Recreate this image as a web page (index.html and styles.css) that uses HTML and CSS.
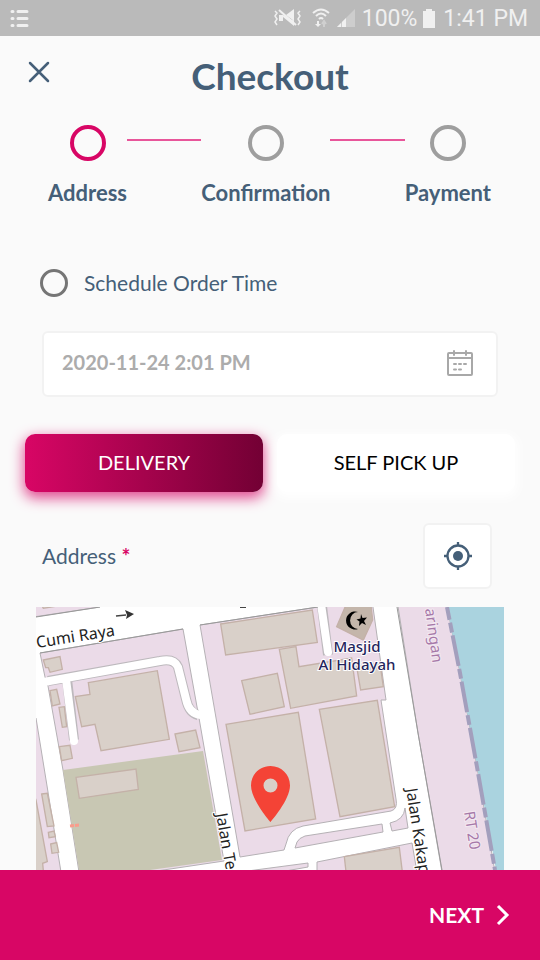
FILE: index.html
```html
<!DOCTYPE html>
<html lang="en">
<head>
<meta charset="utf-8">
<meta name="viewport" content="width=device-width, initial-scale=1">
<title>Checkout</title>
<link rel="stylesheet" href="styles.css">
</head>
<body>
<div class="status">
  <svg class="status-list" width="20" height="18" viewBox="0 0 20 18" stroke="currentColor" stroke-width="3" stroke-linecap="round"><path d="M2 2.5h1M8 2.5h9M2 9.5h1M8 9.5h9M2 16.500h1M8 16.500h9"/></svg>
  <svg width="28" height="20" viewBox="0 0 28 20" fill="none" stroke="currentColor" stroke-width="1.500"><path d="M5 7h4v6H5zM12 7l8-6v12zM9 9l11 9v-5L9 7z" fill="currentColor" stroke="none"/><path d="M5 2l17 15" stroke-width="2"/><path d="M1 3l2 2-2 3 2 3-2 3 2 3M26 3l-2 2 2 3-2 3 2 3-2 3"/></svg>
  <svg class="status-wifi" width="18" height="20" viewBox="0 0 18 20" fill="none" stroke="currentColor" stroke-width="2"><path d="M1 5q8-7 16 0M4 8q5-5 10 0M7 11q2-2 4 0"/><path d="M6 13v4" /><path d="M3 16h6l-3 3z" fill="currentColor" stroke="none"/><path d="M12 19v-4M10 16l2-3 2 3" opacity=".4"/></svg>
  <svg width="20" height="20" viewBox="0 0 20 20" fill="currentColor"><path d="M1 19L19 1v18z" opacity=".35"/><path d="M1 19l4-4v4zM6 19v-5l4-4v9z"/></svg>
  <span class="status-text">100%</span>
  <svg class="status-battery" width="12" height="19" viewBox="0 0 12 19" fill="currentColor"><path d="M3 0h6v2h3v17H0V2h3z"/></svg>
  <span class="status-text">1:41 PM</span>
</div>

<main class="page">
  <header class="header">
    <button class="close" aria-label="Close"><svg width="22" height="22" viewBox="0 0 22 22" fill="none" stroke="currentColor" stroke-width="2.500" stroke-linecap="round"><path d="M2 2l18 18M20 2L2 20"/></svg></button>
    <h1 class="title">Checkout</h1>
  </header>

  <ol class="steps">
    <li class="step step-current"><span class="dot"></span>Address</li>
    <li class="line" role="presentation"></li>
    <li class="step"><span class="dot"></span>Confirmation</li>
    <li class="line" role="presentation"></li>
    <li class="step"><span class="dot"></span>Payment</li>
  </ol>

  <form class="form">
    <label class="schedule"><input type="radio" name="schedule">Schedule Order Time</label>
    <div class="field">
      <input class="date" type="text" value="2020-11-24 2:01 PM" aria-label="Order time">
      <button class="calendar" type="button" aria-label="Pick a date"><svg width="28" height="28" viewBox="0 0 28 28" fill="none" stroke="currentColor" stroke-width="2" stroke-linecap="round"><rect x="2" y="4" width="24" height="22" rx="1"/><path d="M2 9h24M8 2v4M20 2v4"/><path d="M8 15h2M13 15h2M18 15h2M8 20.500h2M13 20.500h2" /></svg></button>
    </div>
    <div class="modes">
      <button class="mode mode-on" type="button">DELIVERY</button>
      <button class="mode" type="button">SELF PICK UP</button>
    </div>
    <div class="address">
      <span>Address <b class="required">*</b></span>
      <button class="locate" type="button" aria-label="Use my location"><svg width="30" height="30" viewBox="0 0 30 30" fill="none" stroke="currentColor" stroke-width="2.300"><circle cx="15" cy="15" r="10.500"/><circle cx="15" cy="15" r="5" fill="currentColor" stroke="none"/><path d="M15 1v4M15 25v4M1 15h4M25 15h4"/></svg></button>
    </div>
  </form>

  <div class="map">
    <svg class="map-art" viewBox="36 607 468 263" preserveAspectRatio="xMidYMin slice" role="img" aria-label="Map">
      <path fill="#fff" d="M36 607h468v263H36z"/>
      <g class="land">
        <path d="M30 617.500L100 607V600H30z"/>
        <path d="M40 653L183 629L199 718L224 861L150 872H79L63 770L48 686L45 677z"/>
        <path d="M36 718L61 872H30V718z"/>
        <path d="M200 625L318 607V600H372L386 700H381L396 799Q398 809 391 811L303 826Q289 829 286 844L284 850L240 857z"/>
        <path d="M295 848L297 842Q299 838 305 836L382 824L383 832z"/>
        <path d="M390 823Q404 820 405 808L408 828L392 831z"/>
        <path d="M240 872L308 863V867L280 872zM317 872V862L412 843L417 872z"/>
        <path d="M397 600L418 733L442 872H495L477 767L460 673L446 600z"/>
      </g>
      <path fill="#c8c7b3" d="M63 770L203 751L222 860L150 870H79z"/>
      <path fill="#aad3df" d="M447 607L460 673L477 767L496 870H504V607z"/>
      <g fill="none" stroke-linejoin="round">
        <path stroke="#bdb9bd" stroke-width="10" d="M48 681L160 661Q174 658 178 667L186 699Q189 713 198 715M67 679L74 740"/>
        <path stroke="#fff" stroke-width="8" stroke-linecap="round" d="M44 682L160 661Q174 658 178 667L186 699Q189 714 201 715M66 679L74 741"/>
        <path stroke="#bdb9bd" stroke-width="10" d="M322 606L328 655"/>
        <path stroke="#fff" stroke-width="8" stroke-linecap="round" d="M321 604L328 652"/>
      </g>
      <path fill="none" stroke="#999" d="M40 653L183 629M200 625L318 607M397 607L418 733L442 870M36 617L100 607"/>
      <g class="buildings" transform="translate(30 600) scale(.3333)">
        <path d="M40 180L90 170L97 208L60 217L55 203L47 203zM60 272L80 268L90 312L67 318zM87 322L103 320L110 380L97 382zM88 440L120 436L127 475L95 482z"/>
        <path d="M175 248L382 212L418 418L213 452L195 373L155 380L136 290L180 283zM435 402L497 390L510 443L447 455zM138 532L318 507L325 568L148 595z"/>
        <path d="M35 582L52 580L72 678L52 680zM55 697L72 693L76 710L57 713zM62 732L80 728L86 757L66 760zM10 580L18 600L52 785L38 790L40 812H10zM35 15L40 25L100 15z"/>
      </g>
      <g class="buildings" transform="translate(190 600) scale(.3333)">
        <path d="M92 72L367 30L382 127L107 165zM268 148L318 140L327 200L485 174L500 288L302 325zM155 242L262 220L283 320L180 343zM108 373L325 337L377 657L165 693z"/>
        <path d="M388 328L562 301L614 620L450 650zM500 200L570 190L580 260L512 270zM463 770L628 742L637 815H468z"/>
        <path fill="#c4b6ab" d="M468 15L440 80L520 120L548 60L543 15z"/>
      </g>
      <path fill="none" stroke="#a39fbd" stroke-width="4" stroke-dasharray="31 3 10 3" stroke-dashoffset="18" d="M447 607L460 673L477 767L495 870"/>
      <path stroke="#444" stroke-width="1.500" d="M116 616l10-1"/><path fill="#333" d="M125 610l9 4-8 5 1-4z"/>
      <path stroke="#444" stroke-width="2" d="M240 607h6"/>
      <path stroke="#fa9c8c" stroke-width="3" stroke-dasharray="4 1" d="M70 826l9-1"/>
      <path fill="#000" d="M358 612a9 9 0 1 0 0 17a7 7.500 0 1 1 0-17zM361 614l1.500 4 4.500-.5-3 3.500 2 4-4-2-3 3 .5-4.500-3-2 4-1z"/>
      <g class="labels">
        <text x="37" y="648" transform="rotate(-9 37 648)">Cumi Raya</text>
        <text x="216" y="814" transform="rotate(80 216 814)">Jalan Teri</text>
        <text x="406" y="789" transform="rotate(81 406 789)">Jalan Kakap</text>
        <g class="place"><text x="357" y="652">Masjid</text><text x="357" y="670">Al Hidayah</text></g>
        <g class="area"><text x="425" y="609" transform="rotate(82 425 609)">aringan</text><text x="464" y="812" transform="rotate(81 464 812)">RT 20</text></g>
      </g>
      <path fill="#f44336" fill-rule="evenodd" d="M270.500 766c-11 0-19.500 8.500-19.500 19.500C251 800 270.500 822 270.500 822S290 800 290 785.500c0-11-8.500-19.500-19.500-19.500zm0 12.500a7 7 0 1 1 0 14a7 7 0 1 1 0-14z"/>
    </svg>
  </div>
</main>

<footer class="footer">
  <button class="next">NEXT <svg width="14" height="22" viewBox="0 0 14 22" fill="none" stroke="currentColor" stroke-width="3"><path d="M2 2l9 9-9 9"/></svg></button>
</footer>
</body>
</html>
```
FILE: styles.css
```css
* {
  box-sizing: border-box;
}

body {
  margin: 0;
  height: 100vh;
  display: flex;
  flex-direction: column;
  background: #fafafa;
  color: #455f78;
  font: 21px/28px Lato, "Open Sans", sans-serif;
}

button {
  padding: 0;
  border: 0;
  background: none;
  color: inherit;
  font: inherit;
}

svg {
  display: block;
  flex: none;
}

.status {
  flex: none;
  height: 36px;
  padding: 0 12px 0 10px;
  display: flex;
  align-items: center;
  gap: 6px;
  background: #bababa;
  color: #f0f0f0;
  font: 23px/36px Roboto, sans-serif;
}

.status-list {
  margin-right: auto;
}

.status-wifi {
  margin-left: 4px;
}

.status-text {
  padding-top: 2px;
}

.status-battery {
  margin-right: 2px;
}

.page {
  flex: 1;
  min-height: 0;
  display: flex;
  flex-direction: column;
}

.header {
  display: grid;
  grid-template-columns: 50px 1fr 50px;
  padding: 18px 0 0;
}

.close {
  width: 22px;
  height: 36px;
  margin-left: 28px;
}

.title {
  margin: 0;
  text-align: center;
  font-size: 37px;
  line-height: 44px;
}

.steps {
  display: flex;
  margin: 0;
  padding: 27px 49px 0 48px;
  list-style: none;
  font-size: 22px;
  font-weight: bold;
}

.step {
  display: flex;
  flex-direction: column;
  align-items: center;
  gap: 18px;
}

.dot {
  width: 36px;
  height: 36px;
  border: 4px solid #9e9e9e;
  border-radius: 50%;
}

.step-current .dot {
  border-color: #d80665;
}

.line {
  flex: 1;
  height: 2px;
  margin-top: 14px;
  background: #e8559a;
}

.schedule {
  display: flex;
  align-items: center;
  gap: 16px;
  padding: 62px 40px 0;
}

.schedule input {
  appearance: none;
  width: 28px;
  height: 28px;
  margin: 0;
  border: 3px solid #757575;
  border-radius: 50%;
}

.field {
  display: flex;
  align-items: center;
  height: 66px;
  margin: 34px 42px 0;
  padding: 0 22px 2px 18px;
  border: 2px solid #f2f2f2;
  border-radius: 6px;
  background: #fff;
}

.date {
  flex: 1;
  min-width: 0;
  padding: 0 0 2px;
  border: 0;
  outline: 0;
  background: none;
  color: #acacac;
  font: bold 20px/28px Lato, sans-serif;
}

.calendar {
  color: #a8a8a8;
}

.modes {
  display: grid;
  grid-template-columns: 1fr 1fr;
  gap: 14px;
  margin: 37px 25px 0;
}

.mode {
  height: 58px;
  padding-bottom: 2px;
  border-radius: 10px;
  background: #fff;
  color: #000;
  font-size: 20px;
  box-shadow: 0 3px 12px 3px #fff;
}

.mode-on {
  background: linear-gradient(90deg, #d80665, #730034);
  color: #fff;
  box-shadow: 0 5px 14px 1px #e0498f;
}

.address {
  display: flex;
  align-items: center;
  justify-content: space-between;
  padding: 31px 48px 0 42px;
}

.required {
  color: #d80665;
}

.locate {
  display: grid;
  place-items: center;
  width: 69px;
  height: 66px;
  border: 2px solid #f2f2f2;
  border-radius: 6px;
  background: #fff;
}

.map {
  flex: 1;
  min-height: 0;
  margin: 18px 36px 0;
}

.map-art {
  width: 100%;
  height: 100%;
}

.land {
  fill: #ebdbe8;
  stroke: #b5b1b5;
}

.buildings {
  fill: #d9d0c9;
  stroke: #c4b1a8;
  stroke-width: 4px;
}

.labels {
  fill: #222;
  stroke: #fff;
  stroke-width: 2px;
  paint-order: stroke;
  font: 16px "Noto Sans", sans-serif;
}

.place {
  fill: #24245c;
  font-size: 15px;
  font-weight: 500;
  text-anchor: middle;
}

.area {
  fill: #a678a8;
  stroke: #f3e8f1;
  font-size: 15px;
}

.footer {
  flex: none;
  height: 90px;
  padding: 0 30px;
  display: flex;
  align-items: center;
  justify-content: flex-end;
  background: #d80665;
  color: #fff;
}

.next {
  display: flex;
  align-items: center;
  gap: 12px;
  font-weight: bold;
}
```
